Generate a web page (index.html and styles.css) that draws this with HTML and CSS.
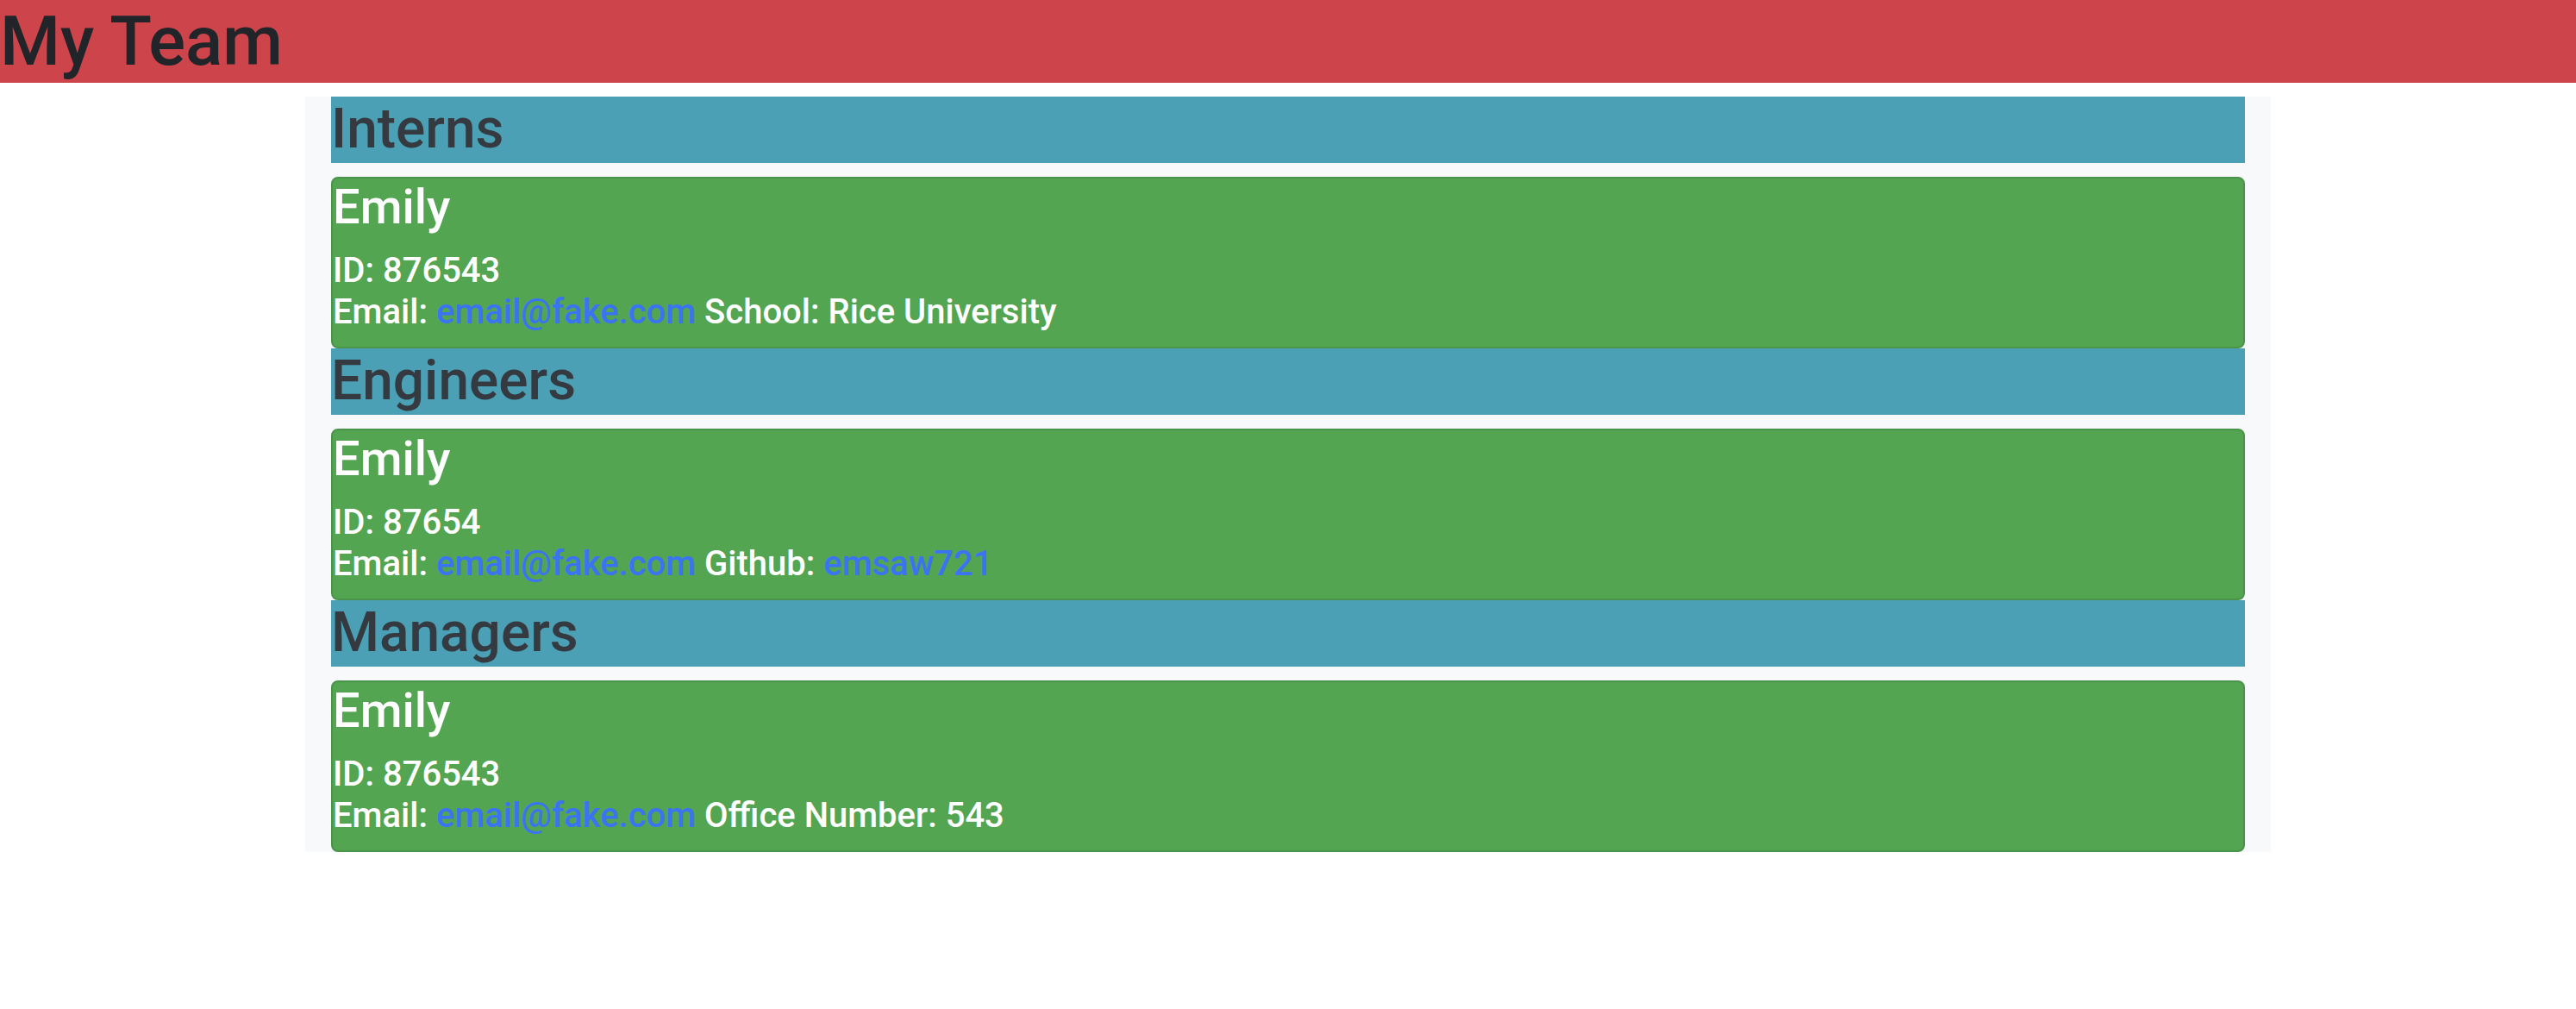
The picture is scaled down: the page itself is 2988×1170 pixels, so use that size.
FILE: index.html
```html
<!DOCTYPE html>
<html lang="en">
<head>
<meta charset="utf-8">
<title>My Team</title>
<link rel="stylesheet" href="styles.css">
</head>
<body>
<header class="top">
  <h1 class="top-title">My Team</h1>
</header>
<main class="team">
  <h2 class="group">Interns</h2>
  <div class="card">
    <h3 class="name">Emily</h3>
    <h5 class="info">ID: 876543<br>Email: <a href="#">email@fake.com</a> School: Rice University</h5>
  </div>
  <h2 class="group">Engineers</h2>
  <div class="card">
    <h3 class="name">Emily</h3>
    <h5 class="info">ID: 87654<br>Email: <a href="#">email@fake.com</a> Github: <a href="#">emsaw721</a></h5>
  </div>
  <h2 class="group">Managers</h2>
  <div class="card">
    <h3 class="name">Emily</h3>
    <h5 class="info">ID: 876543<br>Email: <a href="#">email@fake.com</a> Office Number: 543</h5>
  </div>
</main>
</body>
</html>
```
FILE: styles.css
```css
html, body {
  margin: 0;
  padding: 0;
  background: #ffffff;
  font-family: Roboto, "Liberation Sans", Arial, sans-serif;
  color: #212529;
}

.top {
  background: #cd444b;
  margin-bottom: 16px;
}

.top-title {
  margin: 0;
  font-size: 80px;
  line-height: 1.2;
  font-weight: 500;
  color: #212529;
}

.team {
  width: 2280px;
  margin: 0 auto;
  padding: 0 30px;
  box-sizing: border-box;
  background: #f8f9fa;
  display: flex;
  flex-direction: column;
}

.group {
  margin: 0 0 16px;
  background: #4ba0b5;
  color: #343a40;
  font-size: 64px;
  line-height: 1.2;
  font-weight: 500;
}

.card {
  background: #53a551;
  border: 2px solid #4a944a;
  border-radius: 8px;
  color: #ffffff;
}

.name {
  margin: 0 0 16px;
  font-size: 56px;
  line-height: 1.2;
  font-weight: 500;
}

.info {
  margin: 0 0 16px;
  font-size: 40px;
  line-height: 1.2;
  font-weight: 500;
}

.info a {
  color: #3a74f2;
  text-decoration: none;
}
```
